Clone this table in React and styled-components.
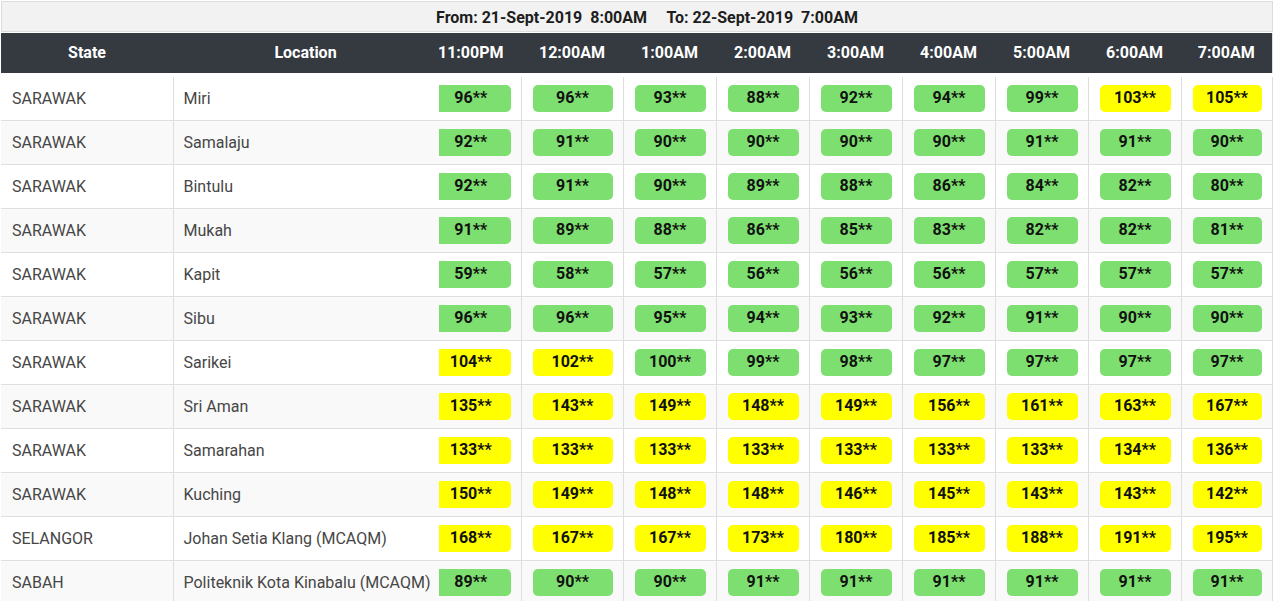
import styled, { createGlobalStyle } from "styled-components";

const GlobalStyle = createGlobalStyle`
  body {
    margin: 0;
    background: #fff;
    font-family: Roboto, "Liberation Sans", sans-serif;
  }
`;

const Wrap = styled.div`
  width: 1272px;
  padding: 1px 0 0 1px;
  overflow: hidden;
`;

const Caption = styled.div`
  height: 31px;
  border: 1px solid #dcdcdc;
  background: #f2f2f2;
  display: flex;
  align-items: center;
  justify-content: center;
  padding: 2px 0 0 20px;
  box-sizing: border-box;
  font-size: 16px;
  font-weight: 700;
  color: #1d1d1d;
  white-space: pre;
  margin-bottom: 1px;
`;

const Table = styled.table`
  width: 1271px;
  table-layout: fixed;
  border-collapse: collapse;
  border-right: 1px solid #dedede;
`;

const Th = styled.th`
  height: 38px;
  padding: 0 ${(p) => p.$shift || 0}px 2px 0;
  background: #343a40;
  color: #fff;
  font-size: 16px;
  font-weight: 700;
  text-align: center;
  border-bottom: 4px solid #fff;
`;

const Row = styled.tr`
  background: ${(p) => (p.$odd ? "#f9f9f9" : "#fff")};
`;

const TextCell = styled.td`
  height: 43px;
  padding: 0 0 0 ${(p) => p.$pad}px;
  border-top: 1px solid #dedede;
  border-right: ${(p) => (p.$line ? "1px solid #dedede" : "none")};
  font-size: 16px;
  color: #464646;
  white-space: nowrap;
  overflow: visible;
`;

const ValueCell = styled.td`
  height: 43px;
  padding: 0 ${(p) => p.$right}px 0 ${(p) => p.$left}px;
  border-top: 1px solid #dedede;
  border-right: 1px solid #dedede;
`;

const Pill = styled.div`
  height: 27px;
  display: flex;
  align-items: center;
  justify-content: center;
  padding: 0 ${(p) => (p.$flat ? 8 : 0)}px 2px 0;
  box-sizing: border-box;
  border-radius: ${(p) => (p.$flat ? "0 5px 5px 0" : "5px")};
  background: ${(p) => (p.$high ? "#ffff00" : "#7ddf6f")};
  color: #111;
  font-size: 16px;
  font-weight: 700;
`;

const hours = [
  "11:00PM",
  "12:00AM",
  "1:00AM",
  "2:00AM",
  "3:00AM",
  "4:00AM",
  "5:00AM",
  "6:00AM",
  "7:00AM",
];
const widths = [83, 102, 93, 93, 93, 93, 93, 93, 91];

const rows = [
  ["SARAWAK", "Miri", [96, 96, 93, 88, 92, 94, 99, 103, 105]],
  ["SARAWAK", "Samalaju", [92, 91, 90, 90, 90, 90, 91, 91, 90]],
  ["SARAWAK", "Bintulu", [92, 91, 90, 89, 88, 86, 84, 82, 80]],
  ["SARAWAK", "Mukah", [91, 89, 88, 86, 85, 83, 82, 82, 81]],
  ["SARAWAK", "Kapit", [59, 58, 57, 56, 56, 56, 57, 57, 57]],
  ["SARAWAK", "Sibu", [96, 96, 95, 94, 93, 92, 91, 90, 90]],
  ["SARAWAK", "Sarikei", [104, 102, 100, 99, 98, 97, 97, 97, 97]],
  ["SARAWAK", "Sri Aman", [135, 143, 149, 148, 149, 156, 161, 163, 167]],
  ["SARAWAK", "Samarahan", [133, 133, 133, 133, 133, 133, 133, 134, 136]],
  ["SARAWAK", "Kuching", [150, 149, 148, 148, 146, 145, 143, 143, 142]],
  ["SELANGOR", "Johan Setia Klang (MCAQM)", [168, 167, 167, 173, 180, 185, 188, 191, 195]],
  ["SABAH", "Politeknik Kota Kinabalu (MCAQM)", [89, 90, 90, 91, 91, 91, 91, 91, 91]],
];

export default function App() {
  return (
    <Wrap>
      <GlobalStyle />
      <Caption>{"From: 21-Sept-2019  8:00AM     To: 22-Sept-2019  7:00AM"}</Caption>
      <Table>
        <colgroup>
          <col style={{ width: 172 }} />
          <col style={{ width: 265 }} />
          {widths.map((w, i) => (
            <col key={i} style={{ width: w }} />
          ))}
        </colgroup>
        <thead>
          <tr>
            <Th>State</Th>
            <Th>Location</Th>
            {hours.map((h, i) => (
              <Th key={h} $shift={i === 0 ? 18 : 0}>
                {h}
              </Th>
            ))}
          </tr>
        </thead>
        <tbody>
          {rows.map(([state, loc, vals], r) => (
            <Row key={loc} $odd={r % 2 === 1}>
              <TextCell $pad={11} $line>
                {state}
              </TextCell>
              <TextCell $pad={10}>{loc}</TextCell>
              {vals.map((v, i) => (
                <ValueCell key={i} $left={i === 0 ? 1 : 11} $right={10}>
                  <Pill $high={v > 100} $flat={i === 0}>
                    {v}**
                  </Pill>
                </ValueCell>
              ))}
            </Row>
          ))}
        </tbody>
      </Table>
    </Wrap>
  );
}
